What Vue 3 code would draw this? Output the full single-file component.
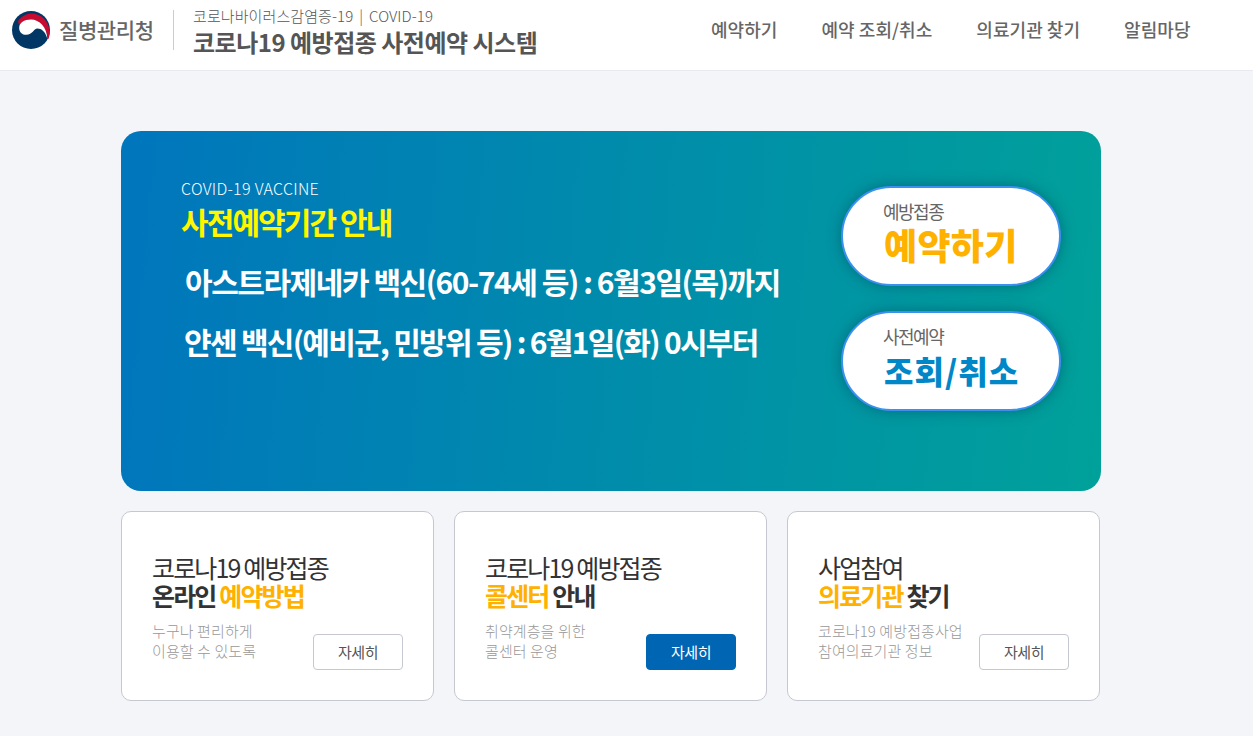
<template>
  <div class="page">
    <header class="top">
      <div class="brand">
        <svg class="logo" width="38" height="38" viewBox="0 0 36 36">
          <circle cx="18" cy="18" r="18" fill="#003764" />
          <path d="M6 9C9.500 4.500 14 2.300 18.500 2.300c9 0 17 7.500 17.200 17.700 0 3-.5 5.500-1.500 7C33.500 17 26 9.500 18 9c-5-.3-8.500 2-10.500 5.500-1.200-2-2-4-1.500-5.500z" fill="#c60c30" />
          <path d="M6.800 16C6.800 11 11.500 8 18 8c8 0 15 7.500 15.500 18-2-6.500-5.500-9.500-9.500-9.500-3.500 0-4.500 6-10.500 6-4 0-6.700-2.500-6.700-6.500z" fill="#fff" />
        </svg>
        <span class="agency">질병관리청</span>
      </div>
      <div class="titles">
        <p class="sub">코로나바이러스감염증-19 | COVID-19</p>
        <p class="sys">코로나19 예방접종 사전예약 시스템</p>
      </div>
      <nav class="nav">
        <a v-for="m in menu" :key="m">{{ m }}</a>
      </nav>
    </header>

    <main class="wrap">
      <section class="hero">
        <div class="notice">
          <p class="eng">COVID-19 VACCINE</p>
          <h1>사전예약기간 안내</h1>
          <p class="line first">아스트라제네카 백신(60-74세 등) : 6월3일(목)까지</p>
          <p class="line">얀센 백신(예비군, 민방위 등) : 6월1일(화) 0시부터</p>
        </div>
        <div class="pills">
          <a class="pill">
            <span class="small">예방접종</span>
            <strong class="yellow">예약하기</strong>
          </a>
          <a class="pill">
            <span class="small">사전예약</span>
            <strong class="blue">조회/취소</strong>
          </a>
        </div>
      </section>

      <section class="cards">
        <article v-for="c in cards" :key="c.id" class="card">
          <h2>{{ c.head }}</h2>
          <h3>
            <template v-for="part in c.title" :key="part.t">
              <em v-if="part.hi">{{ part.t }}</em><template v-else>{{ part.t }}</template>
            </template>
          </h3>
          <div class="foot">
            <p>{{ c.l1 }}<br />{{ c.l2 }}</p>
            <a class="more" :class="{ solid: c.solid }">자세히</a>
          </div>
        </article>
      </section>
    </main>
  </div>
</template>

<script setup>
const menu = ['예약하기', '예약 조회/취소', '의료기관 찾기', '알림마당']

const cards = [
  {
    id: 1,
    head: '코로나19 예방접종',
    title: [{ t: '온라인 ' }, { t: '예약방법', hi: true }],
    l1: '누구나 편리하게',
    l2: '이용할 수 있도록',
  },
  {
    id: 2,
    head: '코로나19 예방접종',
    title: [{ t: '콜센터', hi: true }, { t: ' 안내' }],
    l1: '취약계층을 위한',
    l2: '콜센터 운영',
    solid: true,
  },
  {
    id: 3,
    head: '사업참여',
    title: [{ t: '의료기관', hi: true }, { t: ' 찾기' }],
    l1: '코로나19 예방접종사업',
    l2: '참여의료기관 정보',
  },
]
</script>

<style>
html,
body {
  background: #f4f5f8;
}
</style>

<style scoped>
.page {
  height: 736px;
  overflow: hidden;
  background: #f4f5f8;
  font-family: "Noto Sans CJK KR", "Noto Sans", sans-serif;
}

p,
h1,
h2,
h3 {
  margin: 0;
  font-weight: inherit;
}

.top {
  display: flex;
  align-items: center;
  height: 60px;
  padding-bottom: 10px;
  background: #fff;
  border-bottom: 1px solid #e8eaf0;
}

.brand {
  display: flex;
  align-items: center;
  width: 174px;
  height: 40px;
  padding-left: 12px;
  box-sizing: border-box;
  border-right: 1px solid #ccc;
}

.logo {
  margin-top: -1px;
}

.agency {
  margin: -3px 0 0 9px;
  font-size: 21px;
  line-height: 36px;
  font-weight: 500;
  letter-spacing: -0.4px;
  color: #666;
}

.titles {
  margin: 4px 0 0 19px;
  width: 518px;
}

.sub {
  font-size: 15px;
  line-height: 16px;
  font-weight: 300;
  letter-spacing: 0.1px;
  word-spacing: 2.5px;
  color: #555;
}

.sys {
  margin-top: 3px;
  font-size: 24px;
  line-height: 30px;
  font-weight: 700;
  letter-spacing: -0.5px;
  color: #555;
}

.nav {
  display: flex;
  gap: 44px;
  margin-top: -2px;
}

.nav a {
  font-size: 18px;
  font-weight: 500;
  letter-spacing: 0.05px;
  color: #666;
}

.wrap {
  width: 980px;
  margin-left: 121px;
  padding-top: 60px;
}

.hero {
  display: flex;
  justify-content: space-between;
  height: 360px;
  border-radius: 20px;
  background: linear-gradient(95deg, #0076bd, #00a19a);
}

.notice {
  padding: 47px 0 0 60px;
  color: #fff;
}

.eng {
  font-size: 16px;
  line-height: 20px;
  font-weight: 300;
  letter-spacing: 0.3px;
}

h1 {
  margin-top: 4px;
  font-size: 30px;
  line-height: 38px;
  font-weight: 700;
  letter-spacing: -1.9px;
  color: #fff600;
}

.line {
  margin-top: 20px;
  margin-left: 3px;
  font-size: 30px;
  line-height: 40px;
  font-weight: 700;
  letter-spacing: -1.7px;
}

.line.first {
  margin-top: 21px;
  margin-left: 4px;
  letter-spacing: -1.45px;
}

.pills {
  display: flex;
  flex-direction: column;
  gap: 25px;
  padding: 55px 40px 0 0;
}

.pill {
  display: flex;
  flex-direction: column;
  width: 220px;
  height: 100px;
  box-sizing: border-box;
  padding: 11px 0 0 40px;
  border: 2px solid #3b90f0;
  border-radius: 50px;
  background: #fff;
  box-shadow: 0 0 14px rgba(0, 70, 90, 0.5);
}

.small {
  font-size: 18px;
  line-height: 24px;
  letter-spacing: -1.5px;
  color: #666;
}

.pill strong {
  margin-left: 1px;
  line-height: 40px;
  font-weight: 900;
}

.yellow {
  margin-top: 1px;
  font-size: 36px;
  letter-spacing: 0.3px;
  color: #ffb100;
}

.blue {
  margin-top: 2px;
  font-size: 32px;
  letter-spacing: 1px;
  color: #0087c8;
}

.cards {
  display: flex;
  gap: 20px;
  margin-top: 20px;
}

.card {
  width: 313px;
  height: 190px;
  box-sizing: border-box;
  padding: 41px 30px 0 30px;
  background: #fff;
  border: 1px solid #c5c8d0;
  border-radius: 10px;
}

h2,
h3 {
  font-size: 25px;
  line-height: 28px;
  letter-spacing: -1.85px;
  color: #333;
}

h2 {
  font-weight: 400;
}

h3 {
  font-weight: 700;
}

h3 em {
  font-style: normal;
  color: #ffb100;
}

.foot {
  display: flex;
  justify-content: space-between;
  margin-top: 12px;
}

.foot p {
  font-size: 15px;
  line-height: 20px;
  font-weight: 300;
  letter-spacing: 0.1px;
  color: #999;
}

.more {
  width: 90px;
  height: 36px;
  margin-top: 13px;
  box-sizing: border-box;
  border: 1px solid #c5c8d0;
  border-radius: 4px;
  font-size: 15px;
  line-height: 34px;
  text-align: center;
  letter-spacing: -0.5px;
  color: #555;
}

.more.solid {
  background: #0066b3;
  border-color: #0066b3;
  color: #fff;
}
</style>
